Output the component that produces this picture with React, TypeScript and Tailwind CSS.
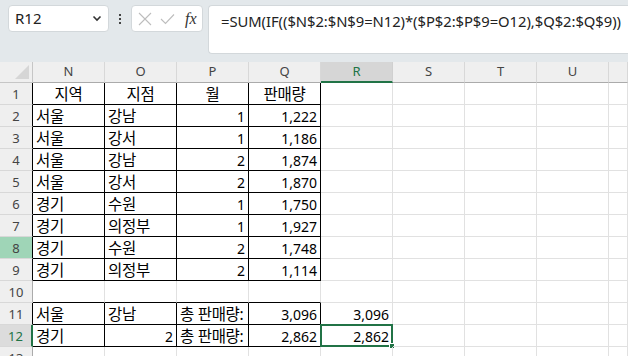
import React from "react";

type Cell = { t: string; a?: "l" | "r" | "c" };

const data: Record<number, Cell[]> = {
  1: [{ t: "지역", a: "c" }, { t: "지점", a: "c" }, { t: "월", a: "c" }, { t: "판매량", a: "c" }],
  2: [{ t: "서울" }, { t: "강남" }, { t: "1", a: "r" }, { t: "1,222", a: "r" }],
  3: [{ t: "서울" }, { t: "강서" }, { t: "1", a: "r" }, { t: "1,186", a: "r" }],
  4: [{ t: "서울" }, { t: "강남" }, { t: "2", a: "r" }, { t: "1,874", a: "r" }],
  5: [{ t: "서울" }, { t: "강서" }, { t: "2", a: "r" }, { t: "1,870", a: "r" }],
  6: [{ t: "경기" }, { t: "수원" }, { t: "1", a: "r" }, { t: "1,750", a: "r" }],
  7: [{ t: "경기" }, { t: "의정부" }, { t: "1", a: "r" }, { t: "1,927", a: "r" }],
  8: [{ t: "경기" }, { t: "수원" }, { t: "2", a: "r" }, { t: "1,748", a: "r" }],
  9: [{ t: "경기" }, { t: "의정부" }, { t: "2", a: "r" }, { t: "1,114", a: "r" }],
  11: [{ t: "서울" }, { t: "강남" }, { t: "총 판매량:" }, { t: "3,096", a: "r" }, { t: "3,096", a: "r" }],
  12: [{ t: "경기" }, { t: "2", a: "r" }, { t: "총 판매량:" }, { t: "2,862", a: "r" }, { t: "2,862", a: "r" }],
};

const cols = ["N", "O", "P", "Q", "R", "S", "T", "U", ""];

const inTable = (r: number, c: number) =>
  c >= 0 && c <= 3 && ((r >= 1 && r <= 9) || r === 11 || r === 12);

const isKo = (s: string) => /[\uac00-\ud7a3]/.test(s);

export default function App() {
  const rows = Array.from({ length: 13 }, (_, i) => i + 1);
  return (
    <div
      className="w-[628px] h-[356px] overflow-hidden bg-white"
      style={{ fontFamily: '"Noto Sans", "Noto Sans CJK KR", sans-serif' }}
    >
      {/* Top bar */}
      <div className="h-[62px] bg-[#e3e8eb] flex items-start pt-[5px] pl-[8px]">
        <div className="w-[101px] h-[27px] bg-white rounded-[4px] border border-[#d3d8db] flex items-center pl-[6px] pr-[6px] justify-between">
          <span className="text-[15px] text-[#222]">R12</span>
          <svg width="10" height="7" viewBox="0 0 10 7">
            <path d="M1.5 1.5 L5 5 L8.5 1.5" stroke="#333" strokeWidth="1.6" fill="none" />
          </svg>
        </div>
        <div className="w-[22px] h-[27px] flex flex-col items-center justify-center gap-[2px]">
          <div className="w-[2px] h-[2px] bg-[#444]" />
          <div className="w-[2px] h-[2px] bg-[#444]" />
          <div className="w-[2px] h-[2px] bg-[#444]" />
        </div>
        <div className="w-[72px] h-[27px] bg-white rounded-[4px] border border-[#d3d8db] flex items-center pl-[6px] gap-[8px]">
          <svg width="14" height="14" viewBox="0 0 14 14">
            <path d="M1 1 L13 13 M13 1 L1 13" stroke="#bdbdbd" strokeWidth="1.1" fill="none" />
          </svg>
          <svg width="15" height="12" viewBox="0 0 15 12">
            <path d="M1 6 L5.5 10.5 L14 1.5" stroke="#bdbdbd" strokeWidth="1.1" fill="none" />
          </svg>
          <span
            className="text-[16px] italic text-[#333] leading-none ml-[2px]"
            style={{ fontFamily: '"Liberation Serif", serif' }}
          >
            fx
          </span>
        </div>
        <div className="ml-[5px] flex-1 h-[49px] bg-white rounded-l-[4px] border border-r-0 border-[#d3d8db] pl-[12px] pt-[3px]">
          <span className="text-[14.8px] tracking-[-0.05px] text-[#222] whitespace-nowrap" style={{ fontFamily: '"Noto Sans", sans-serif' }}>
            =SUM(IF(($N$2:$N$9=N12)*($P$2:$P$9=O12),$Q$2:$Q$9))
          </span>
        </div>
      </div>

      {/* Grid */}
      <div className="grid grid-cols-[33px_repeat(8,72px)_19px] grid-rows-[21px_repeat(13,22px)]">
        {/* header row */}
        <div className="bg-[#efefef] border-r border-b border-[#c6c6c6] relative">
          <div
            className="absolute right-[3px] bottom-[3px] w-0 h-0 border-l-[14px] border-l-transparent border-b-[14px] border-b-[#d6d6d6]"
          />
        </div>
        {cols.map((c, i) =>
          c === "R" ? (
            <div
              key={i}
              className="bg-[#d6d6d6] border-r border-r-[#d0d0d0] border-b-2 border-b-[#217346] flex items-center justify-center text-[13px] text-[#217346]"
            >
              {c}
            </div>
          ) : (
            <div
              key={i}
              className="bg-[#efefef] border-r border-r-[#d8d8d8] border-b border-b-[#ababab] flex items-center justify-center text-[13px] text-[#444]"
            >
              {c}
            </div>
          )
        )}

        {rows.map((r) => {
          const rowCells = data[r] || [];
          const tableRow = inTable(r, 0);
          let headerCls =
            "bg-[#efefef] border-b border-b-[#d8d8d8] flex items-center justify-center pt-[2px] text-[13px] text-[#444] ";
          if (r === 8) headerCls = "bg-[#9fd5b7] border-b border-b-[#d8d8d8] flex items-center justify-center pt-[2px] text-[13px] text-[#444] ";
          if (r === 12) headerCls = "bg-[#dcdcdc] border-b border-b-[#d8d8d8] flex items-center justify-center pt-[2px] text-[13px] text-[#217346] ";
          headerCls +=
            r === 12
              ? "border-r-2 border-r-[#217346]"
              : tableRow
              ? "border-r border-r-black"
              : "border-r border-r-[#ababab]";
          return (
            <React.Fragment key={r}>
              <div className={headerCls}>{r}</div>
              {cols.map((_, c) => {
                const cell = rowCells[c];
                const rBlack = inTable(r, c) || inTable(r, c + 1);
                const bBlack = inTable(r, c) || inTable(r + 1, c);
                const cls =
                  "relative flex items-center px-[3px] pt-[3px] text-black whitespace-nowrap overflow-visible " +
                  (rBlack ? "border-r border-r-black " : "border-r border-r-[#e1e1e1] ") +
                  (bBlack ? "border-b border-b-black " : "border-b border-b-[#e1e1e1] ") +
                  (cell?.a === "r" ? "justify-end" : cell?.a === "c" ? "justify-center" : "justify-start");
                return (
                  <div key={c} className={cls}>
                    {cell ? (
                      <span className={isKo(cell.t) ? "leading-none text-[15.5px] tracking-[-0.3px]" : "leading-none text-[14px]"}>
                        {cell.t}
                      </span>
                    ) : null}
                    {r === 12 && c === 4 ? (
                      <div className="absolute -left-[1px] -top-[1px] w-[73px] h-[23px] border-2 border-[#217346] pointer-events-none">
                        <div className="absolute -right-[4px] -bottom-[4px] w-[6px] h-[6px] bg-[#217346] border border-white" />
                      </div>
                    ) : null}
                  </div>
                );
              })}
            </React.Fragment>
          );
        })}
      </div>
    </div>
  );
}
